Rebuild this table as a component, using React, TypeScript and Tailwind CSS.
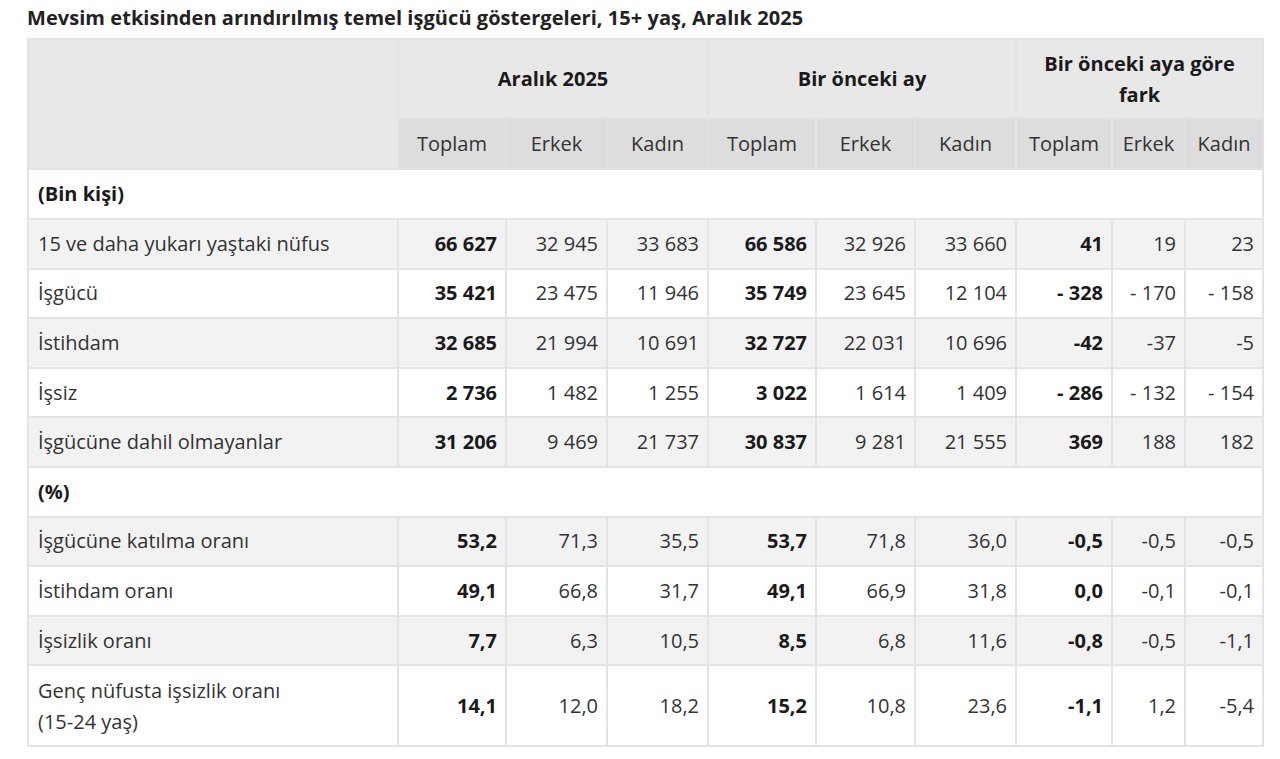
const rows1 = [
  { label: '15 ve daha yukarı yaştaki nüfus', v: ['66 627', '32 945', '33 683', '66 586', '32 926', '33 660', '41', '19', '23'] },
  { label: 'İşgücü', v: ['35 421', '23 475', '11 946', '35 749', '23 645', '12 104', '- 328', '- 170', '- 158'] },
  { label: 'İstihdam', v: ['32 685', '21 994', '10 691', '32 727', '22 031', '10 696', '-42', '-37', '-5'] },
  { label: 'İşsiz', v: ['2 736', '1 482', '1 255', '3 022', '1 614', '1 409', '- 286', '- 132', '- 154'] },
  { label: 'İşgücüne dahil olmayanlar', v: ['31 206', '9 469', '21 737', '30 837', '9 281', '21 555', '369', '188', '182'] },
];

const rows2 = [
  { label: 'İşgücüne katılma oranı', v: ['53,2', '71,3', '35,5', '53,7', '71,8', '36,0', '-0,5', '-0,5', '-0,5'] },
  { label: 'İstihdam oranı', v: ['49,1', '66,8', '31,7', '49,1', '66,9', '31,8', '0,0', '-0,1', '-0,1'] },
  { label: 'İşsizlik oranı', v: ['7,7', '6,3', '10,5', '8,5', '6,8', '11,6', '-0,8', '-0,5', '-1,1'] },
];

const widths = [370, 108, 101, 101, 108, 99, 101, 96, 73, 78];

function DataRow({ label, v, gray, tall }: { label: React.ReactNode; v: string[]; gray: boolean; tall?: boolean }) {
  return (
    <tr className={gray ? 'bg-[#f2f2f2]' : 'bg-white'}>
      <td className={`border-2 border-[#e4e4e4] px-[9px] text-left ${tall ? 'h-[81px] leading-[31px]' : 'h-[49.6px]'}`}>{label}</td>
      {v.map((x, i) => (
        <td
          key={i}
          className={`border-2 border-[#e4e4e4] pr-[8px] text-right whitespace-nowrap ${i % 3 === 0 ? 'font-bold text-[#1a1a1a]' : ''}`}
        >
          {x}
        </td>
      ))}
    </tr>
  );
}

export default function App() {
  return (
    <div className="min-h-screen bg-white pl-[27px] pt-[5px] font-['Open_Sans','Noto_Sans',sans-serif] text-[#333]">
      <h1 className="text-[20px] font-bold leading-[26px] text-[#222] tracking-[0.05px]">
        Mevsim etkisinden arındırılmış temel işgücü göstergeleri, 15+ yaş, Aralık 2025
      </h1>
      <table className="mt-[7px] w-[1235px] table-fixed border-collapse text-[20px]">
        <colgroup>
          {widths.map((w, i) => (
            <col key={i} style={{ width: w }} />
          ))}
        </colgroup>
        <thead>
          <tr className="bg-[#e8e8e8] text-[#1a1a1a]">
            <th rowSpan={2} className="border-2 border-[#e4e4e4]"></th>
            <th colSpan={3} className="h-[79px] border-2 border-[#e4e4e4] font-bold">Aralık 2025</th>
            <th colSpan={3} className="border-2 border-[#e4e4e4] font-bold">Bir önceki ay</th>
            <th colSpan={3} className="border-2 border-[#e4e4e4] font-bold leading-[31px]">
              Bir önceki aya göre
              <br />
              fark
            </th>
          </tr>
          <tr className="bg-[#dddddd]">
            {['Toplam', 'Erkek', 'Kadın', 'Toplam', 'Erkek', 'Kadın', 'Toplam', 'Erkek', 'Kadın'].map((h, i) => (
              <th key={i} className="h-[51px] border-2 border-[#e2e2e2] font-normal text-[#333]">
                {h}
              </th>
            ))}
          </tr>
        </thead>
        <tbody>
          <tr className="bg-white">
            <td colSpan={10} className="h-[50px] border-2 border-[#e4e4e4] px-[9px] font-bold text-[#1a1a1a]">(Bin kişi)</td>
          </tr>
          {rows1.map((r, i) => (
            <DataRow key={r.label} label={r.label} v={r.v} gray={i % 2 === 0} />
          ))}
          <tr className="bg-white">
            <td colSpan={10} className="h-[49.6px] border-2 border-[#e4e4e4] px-[9px] font-bold text-[#1a1a1a]">(%)</td>
          </tr>
          {rows2.map((r, i) => (
            <DataRow key={r.label} label={r.label} v={r.v} gray={i % 2 === 0} />
          ))}
          <DataRow
            label={
              <>
                Genç nüfusta işsizlik oranı
                <br />
                (15-24 yaş)
              </>
            }
            v={['14,1', '12,0', '18,2', '15,2', '10,8', '23,6', '-1,1', '1,2', '-5,4']}
            gray={false}
            tall
          />
        </tbody>
      </table>
    </div>
  );
}
